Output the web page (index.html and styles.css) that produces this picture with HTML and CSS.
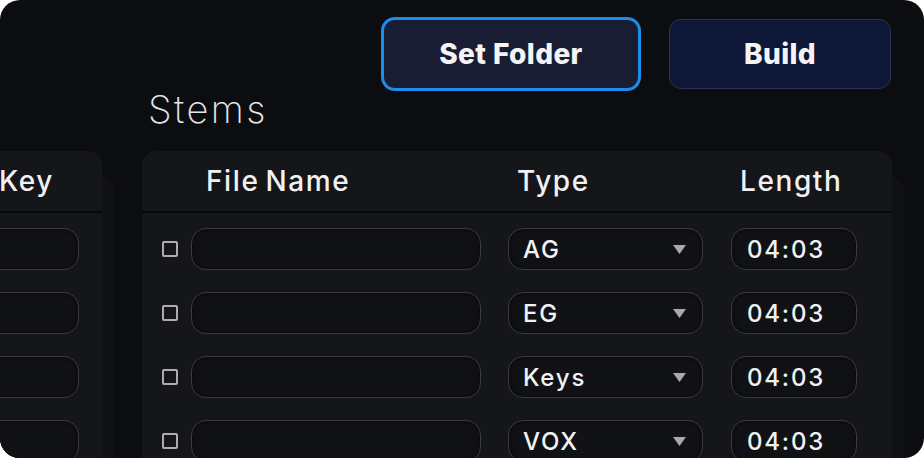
FILE: index.html
```html
<!DOCTYPE html>
<html lang="en">
<head>
<meta charset="utf-8">
<title>Stems</title>
<link rel="stylesheet" href="styles.css">
</head>
<body>
<div class="app">
  <div class="toolbar">
    <button class="btn btn-folder">Set Folder</button>
    <button class="btn btn-build">Build</button>
  </div>
  <div class="content">
    <h2 class="title">Stems</h2>
    <div class="panel panel-key">
      <div class="panel-head key-head"><span>Key</span></div>
      <div class="key-rows">
        <div class="field key-field"></div>
        <div class="field key-field"></div>
        <div class="field key-field"></div>
        <div class="field key-field"></div>
      </div>
    </div>
    <div class="panel panel-stems">
      <div class="panel-head grid">
        <span></span>
        <span class="h-name">File Name</span>
        <span class="h-type">Type</span>
        <span class="h-len">Length</span>
      </div>
      <div class="rows">
        <div class="grid row">
          <span class="check"></span>
          <div class="field name-field"></div>
          <div class="field select"><span>AG</span><svg class="arrow" width="13" height="9" viewBox="0 0 13 9"><polygon points="0,0 13,0 6.5,9" fill="#a9a9ae"/></svg></div>
          <div class="field len-field">04:03</div>
        </div>
        <div class="grid row">
          <span class="check"></span>
          <div class="field name-field"></div>
          <div class="field select"><span>EG</span><svg class="arrow" width="13" height="9" viewBox="0 0 13 9"><polygon points="0,0 13,0 6.5,9" fill="#a9a9ae"/></svg></div>
          <div class="field len-field">04:03</div>
        </div>
        <div class="grid row">
          <span class="check"></span>
          <div class="field name-field"></div>
          <div class="field select"><span>Keys</span><svg class="arrow" width="13" height="9" viewBox="0 0 13 9"><polygon points="0,0 13,0 6.5,9" fill="#a9a9ae"/></svg></div>
          <div class="field len-field">04:03</div>
        </div>
        <div class="grid row">
          <span class="check"></span>
          <div class="field name-field"></div>
          <div class="field select"><span>VOX</span><svg class="arrow" width="13" height="9" viewBox="0 0 13 9"><polygon points="0,0 13,0 6.5,9" fill="#a9a9ae"/></svg></div>
          <div class="field len-field">04:03</div>
        </div>
      </div>
    </div>
  </div>
</div>
</body>
</html>
```
FILE: styles.css
```css
* { box-sizing: border-box; }
html, body { margin: 0; padding: 0; background: #ffffff; }
body { font-family: Inter, "Liberation Sans", sans-serif; color: #f1f1f3; }

.app {
  width: 924px;
  height: 458px;
  background: #0c0d11;
  border-radius: 20px;
  overflow: hidden;
}

.toolbar {
  display: flex;
  justify-content: flex-end;
  align-items: center;
  gap: 28px;
  padding: 17px 33px 0 0;
  height: 91px;
}

.btn {
  font-family: Inter, "Liberation Sans", sans-serif;
  font-weight: 800;
  font-size: 28px;
  color: #f4f4f6;
  letter-spacing: 0.4px;
  cursor: pointer;
}
.btn-folder {
  width: 260px;
  height: 74px;
  background: #191d34;
  border: 3px solid #1b8deb;
  border-radius: 14px;
}
.btn-build {
  width: 222px;
  height: 70px;
  background: #0e1737;
  border: 1px solid #2a3352;
  border-radius: 12px;
}

.content {
  display: grid;
  grid-template-columns: 160px 750px;
  grid-template-rows: 60px auto;
  column-gap: 40px;
  margin-left: -58px;
}

.title {
  grid-column: 2;
  grid-row: 1;
  margin: 0 0 0 6px;
  font-weight: 200;
  font-size: 38px;
  letter-spacing: 2.4px;
  line-height: 36px;
  color: #e6e6e9;
}

.panel {
  grid-row: 2;
  background: #15161a;
  border-radius: 14px;
  height: 340px;
  box-shadow: 12px 26px 0 0 #101115;
}
.panel-key { grid-column: 1; }
.panel-stems { grid-column: 2; }

.panel-head {
  height: 62px;
  border-bottom: 2px solid #07080a;
  align-items: center;
  font-size: 28px;
  font-weight: 500;
  letter-spacing: 1.6px;
}
.key-head {
  display: flex;
  justify-content: flex-end;
  padding-right: 48px;
}

.key-rows {
  display: flex;
  flex-direction: column;
  gap: 22px;
  padding: 15px 23px 0 0;
  align-items: flex-end;
}
.key-field { width: 120px; }

.grid {
  display: grid;
  grid-template-columns: 29px 317px 223px 126px;
  padding-left: 20px;
}

.h-name { padding-left: 15px; word-spacing: -3px; }
.h-type { padding-left: 9px; }
.h-len { padding-left: 9px; }

.rows {
  display: flex;
  flex-direction: column;
  gap: 22px;
  padding-top: 15px;
}
.row { align-items: center; }

.check {
  width: 16px;
  height: 16px;
  border: 2px solid #acacb1;
  border-radius: 2px;
}

.field {
  height: 42px;
  background: #111216;
  border: 1px solid #3a3b40;
  border-radius: 15px;
  box-shadow: inset 0 0 6px rgba(0, 0, 0, 0.55);
  font-size: 24px;
  font-weight: 500;
  letter-spacing: 1.8px;
  color: #f2f2f4;
}
.name-field { width: 290px; }
.select {
  width: 195px;
  display: flex;
  align-items: center;
  justify-content: space-between;
  padding: 0 16px 0 14px;
}
.arrow { display: block; }
.len-field {
  width: 126px;
  display: flex;
  align-items: center;
  padding-left: 15px;
}
```
